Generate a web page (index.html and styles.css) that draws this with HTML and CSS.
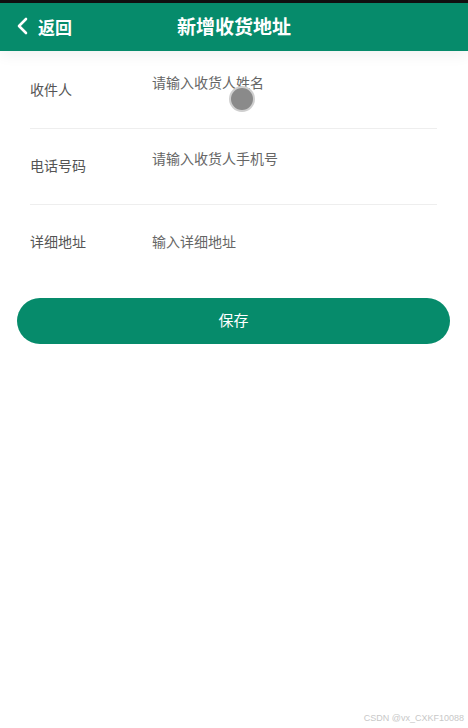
FILE: index.html
```html
<!DOCTYPE html>
<html lang="zh-CN">
<head>
  <meta charset="UTF-8" />
  <meta name="viewport" content="width=device-width, initial-scale=1.0"/>
  <title>新增收货地址</title>
  <link rel="stylesheet" href="styles.css">
</head>
<body>
  <div class="status-bar"></div>

  <header class="top-bar">
    <a href="#" class="back-btn">
      <svg width="12" height="18" viewBox="0 0 12 18"><path d="M10 2 L3 9 L10 16" fill="none" stroke="#fff" stroke-width="2.6" stroke-linecap="round" stroke-linejoin="round"/></svg>
      <span>返回</span>
    </a>
    <h1>新增收货地址</h1>
  </header>

  <main class="form">
    <div class="row">
      <span class="label">收件人</span>
      <span class="field raised">请输入收货人姓名</span>
    </div>
    <div class="row">
      <span class="label">电话号码</span>
      <span class="field raised">请输入收货人手机号</span>
    </div>
    <div class="row last">
      <span class="label">详细地址</span>
      <span class="field">输入详细地址</span>
    </div>

    <button class="save-btn">保存</button>
  </main>

  <div class="touch-dot"></div>
  <div class="watermark">CSDN @vx_CXKF10088</div>
</body>
</html>
```

FILE: styles.css
```css
body {
  margin: 0;
  font-family: "Microsoft YaHei", "Noto Sans CJK SC", sans-serif;
  background: #fff;
  height: 728px;
  position: relative;
  overflow: hidden;
}

.status-bar {
  height: 3px;
  background: #111;
}

.top-bar {
  height: 48px;
  background: #068b6b;
  display: flex;
  align-items: center;
  position: relative;
  box-shadow: 0 4px 14px rgba(0,0,0,0.06);
}

.back-btn {
  display: flex;
  align-items: center;
  gap: 10px;
  padding-left: 16px;
  padding-bottom: 2px;
  color: #fff;
  text-decoration: none;
  font-size: 17px;
  font-weight: bold;
}

.top-bar h1 {
  position: absolute;
  left: 0;
  right: 0;
  top: 10px;
  margin: 0;
  text-align: center;
  color: #fff;
  font-size: 19px;
  line-height: 26px;
  font-weight: bold;
  pointer-events: none;
}

.form {
  padding: 2px 0 0;
}

.row {
  margin: 0 31px 0 30px;
  height: 71px;
  padding-bottom: 4px;
  display: flex;
  align-items: center;
  border-bottom: 1px solid #eeeeee;
  font-size: 14px;
}

.row.last {
  border-bottom: none;
}

.label {
  width: 122px;
  color: #555;
}

.field {
  color: #666;
}

.field.raised {
  margin-bottom: 14px;
}

.save-btn {
  display: block;
  margin: 18px 18px 0 17px;
  width: calc(100% - 35px);
  height: 46px;
  padding-bottom: 4px;
  border: none;
  border-radius: 23px;
  background: #068b6b;
  color: #fff;
  font-family: inherit;
  font-size: 15px;
  cursor: pointer;
}

.touch-dot {
  position: absolute;
  left: 229px;
  top: 86px;
  width: 22px;
  height: 22px;
  border-radius: 50%;
  background: #8a8a8a;
  border: 2px solid #cfcfcf;
}

.watermark {
  position: absolute;
  right: 4px;
  bottom: 5px;
  font-family: "Liberation Sans", sans-serif;
  font-size: 9px;
  color: #c8c8c8;
}
```
